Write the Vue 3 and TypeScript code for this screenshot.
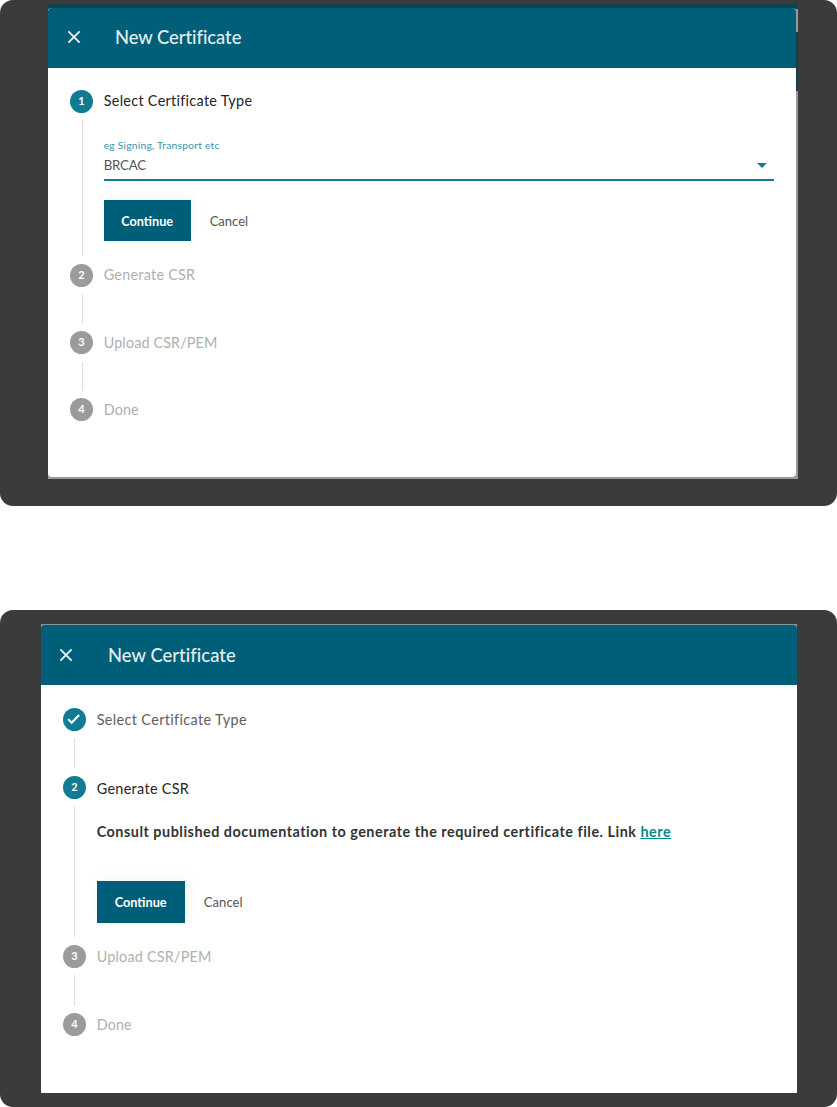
<script setup lang="ts">
interface Step {
  id: string
  label: string
  state: 'active' | 'done' | 'pending'
}
interface Panel {
  id: string
  steps: Step[]
}

const panels: Panel[] = [
  {
    id: 'first',
    steps: [
      { id: 'select', label: 'Select Certificate Type', state: 'active' },
      { id: 'generate', label: 'Generate CSR', state: 'pending' },
      { id: 'upload', label: 'Upload CSR/PEM', state: 'pending' },
      { id: 'finish', label: 'Done', state: 'pending' },
    ],
  },
  {
    id: 'second',
    steps: [
      { id: 'select', label: 'Select Certificate Type', state: 'done' },
      { id: 'generate', label: 'Generate CSR', state: 'active' },
      { id: 'upload', label: 'Upload CSR/PEM', state: 'pending' },
      { id: 'finish', label: 'Done', state: 'pending' },
    ],
  },
]
</script>

<template>
  <main class="page">
    <section v-for="panel in panels" :key="panel.id" class="panel" :class="panel.id">
      <div class="backdrop">
        <div class="dialog">
          <header class="bar">
            <svg class="close" viewBox="0 0 14 14" aria-hidden="true">
              <path d="M1.4 1.4 L12.6 12.6 M12.6 1.4 L1.4 12.6" />
            </svg>
            <h1 class="heading">New Certificate</h1>
          </header>
          <ol class="steps">
            <li v-for="(step, i) in panel.steps" :key="step.id" class="step" :class="[step.state, step.id]">
              <div class="rail">
                <span class="dot">
                  <svg v-if="step.state === 'done'" class="check" viewBox="0 0 14 12" aria-hidden="true">
                    <path d="M1.2 6.2 L4.7 9.7 L12.1 2" />
                  </svg>
                  <template v-else>{{ i + 1 }}</template>
                </span>
                <span v-if="i < panel.steps.length - 1" class="line"></span>
              </div>
              <div class="content">
                <h2 class="label">{{ step.label }}</h2>
                <template v-if="step.state === 'active'">
                  <div v-if="step.id === 'select'" class="field">
                    <span class="hint">eg Signing, Transport etc</span>
                    <div class="value">
                      <span class="chosen">BRCAC</span>
                      <span class="caret"></span>
                    </div>
                  </div>
                  <p v-else class="note">
                    Consult published documentation to generate the required certificate file. Link
                    <a class="link">here</a>
                  </p>
                  <div class="actions">
                    <button class="primary" type="button">Continue</button>
                    <button class="cancel" type="button">Cancel</button>
                  </div>
                </template>
              </div>
            </li>
          </ol>
        </div>
      </div>
    </section>
  </main>
</template>

<style>
body {
  background: #fff;
}
</style>

<style scoped>
.page {
  width: 837px;
  height: 1107px;
  display: flex;
  flex-direction: column;
  gap: 104px;
  overflow: hidden;
  font-family: Lato, 'Open Sans', sans-serif;
}
.panel {
  box-sizing: border-box;
  background: #3b3b3b;
  border-radius: 13px;
}
.first {
  height: 506px;
  padding: 4px 39px 27px 48px;
}
.second {
  height: 497px;
  padding: 14px 40px 14px 41px;
}
.backdrop {
  box-sizing: border-box;
  height: 100%;
}
.first .backdrop {
  padding: 4px 2px 2px 0;
  background: linear-gradient(#10434d 0 5px, #999 5px 28px, #0b4350 28px 87px, #999 87px);
}
.second .backdrop {
  padding-top: 1px;
  background: #8c9598;
}
.dialog {
  height: 100%;
  background: #fff;
  border-radius: 4px;
  overflow: hidden;
}
.second .dialog {
  border-radius: 3px 3px 1px 1px;
}
.bar {
  box-sizing: border-box;
  display: flex;
  align-items: center;
  height: 59.5px;
  padding: 0 0 1px 19px;
  background: #005f78;
}
.second .bar {
  height: 60.4px;
  padding: 0 0 0 18px;
}
.close {
  width: 14px;
  height: 14px;
  flex: none;
}
.close path {
  stroke: #e9f2f4;
  stroke-width: 1.9;
  fill: none;
}
.heading {
  margin: 0 0 0 34px;
  font-size: 18.4px;
  line-height: 24px;
  font-weight: 500;
  color: #e3eef1;
  letter-spacing: -0.05px;
  white-space: nowrap;
}
.second .heading {
  margin-left: 35px;
  letter-spacing: 0.04px;
}
.steps {
  list-style: none;
  margin: 0;
  padding: 22.2px 22px 0;
}
.step {
  display: flex;
  gap: 10.7px;
  height: 67.4px;
}
.second .step {
  height: 68.1px;
}
.first .step.active {
  height: 174px;
}
.second .step.active {
  height: 169.3px;
}
.rail {
  display: flex;
  flex-direction: column;
  align-items: center;
  width: 23px;
  flex: none;
}
.dot {
  width: 23px;
  height: 23px;
  flex: none;
  display: flex;
  align-items: center;
  justify-content: center;
  box-sizing: border-box;
  padding-bottom: 1px;
  border-radius: 50%;
  background: #9b9b9b;
  color: #fff;
  font-size: 11px;
  line-height: 12px;
  font-weight: 700;
}
.active .dot,
.done .dot {
  background: #117b93;
}
.done .dot {
  padding: 0 1px 0 0;
}
.check {
  width: 14px;
  height: 12px;
}
.check path {
  fill: none;
  stroke: #fff;
  stroke-width: 2;
}
.line {
  flex: 1;
  width: 1px;
  margin: 7.5px 0;
  background: #dedede;
}
.first .line {
  margin-left: 1px;
}
.content {
  flex: 1;
  min-width: 0;
}
.label {
  margin: 0;
  font-size: 14.4px;
  line-height: 22px;
  font-weight: 400;
  letter-spacing: 0.3px;
  color: #b0b0b0;
  white-space: nowrap;
}
.second .label {
  line-height: 24px;
}
.first .upload .label,
.first .finish .label {
  line-height: 23px;
}
.step.pending .label {
  letter-spacing: 0.12px;
}
.step.generate .label {
  letter-spacing: 0.25px;
}
.second .step.generate .label {
  letter-spacing: 0.32px;
  line-height: 25px;
}
.second .step.upload .label {
  letter-spacing: 0.2px;
}
.active .label {
  color: #252525;
}
.done .label {
  color: #606060;
  letter-spacing: 0.37px;
}
.field {
  margin-top: 26px;
  border-bottom: 2px solid #117b93;
}
.hint {
  display: block;
  font-size: 10.3px;
  line-height: 14px;
  letter-spacing: 0.22px;
  color: #3995aa;
  white-space: nowrap;
}
.value {
  display: flex;
  align-items: center;
  justify-content: space-between;
  height: 27px;
  padding-right: 7px;
}
.chosen {
  font-size: 13.3px;
  line-height: 20px;
  letter-spacing: -0.2px;
  color: #555;
}
.caret {
  margin-top: 1px;
  border: 5px solid transparent;
  border-top: 5px solid #117b93;
  border-bottom: 0;
}
.note {
  margin: 21px 0 0;
  font-size: 14.4px;
  line-height: 20px;
  font-weight: 700;
  letter-spacing: 0.505px;
  color: #333;
  white-space: nowrap;
}
.link {
  color: #078a8a;
  text-decoration: underline;
}
.actions {
  display: flex;
  margin-top: 19.5px;
}
.second .actions {
  margin-top: 39.2px;
}
.actions button {
  border: 0;
  padding: 0;
  font-family: inherit;
  font-size: 13px;
  height: 41px;
}
.second .actions button {
  height: 42px;
  padding-top: 1px;
}
.actions .primary {
  width: 87px;
  background: #005f78;
  color: #fff;
  font-size: 12.7px;
  font-weight: 700;
  box-shadow: 3px -4px 12px rgba(0, 0, 0, 0.04);
}
.second .actions .primary {
  width: 88px;
}
.actions .cancel {
  margin-left: 19px;
  background: none;
  color: #555;
}
.second .cancel {
  letter-spacing: 0.1px;
}
</style>
